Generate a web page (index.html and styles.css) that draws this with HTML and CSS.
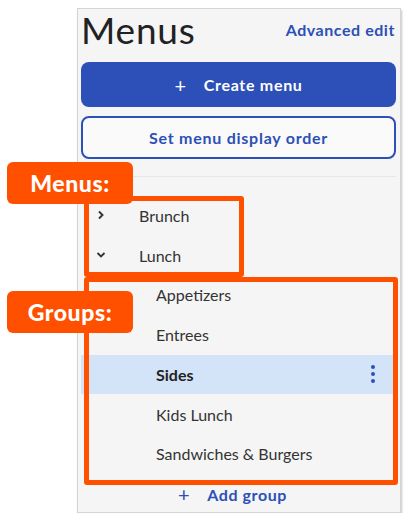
FILE: index.html
```html
<!DOCTYPE html>
<html lang="en">
<head>
<meta charset="utf-8">
<link rel="stylesheet" href="styles.css">
</head>
<body>
<div class="panel">
  <div class="header">
    <h1 class="title">Menus</h1>
    <a class="adv-link">Advanced edit</a>
  </div>
  <button class="btn btn-primary"><span class="plus">+</span>Create menu</button>
  <button class="btn btn-outline">Set menu display order</button>
  <div class="separator"></div>
  <ul class="list">
    <li class="row menu-row">
      <span class="chev">
        <svg width="10" height="10" viewBox="0 0 10 10"><path d="M3 1.5 L6.5 5 L3 8.5" fill="none" stroke="#333" stroke-width="1.9"/></svg>
      </span>
      <span class="menu-name">Brunch</span>
    </li>
    <li class="row menu-row">
      <span class="chev">
        <svg width="10" height="10" viewBox="0 0 10 10"><path d="M1.5 3 L5 6.5 L8.5 3" fill="none" stroke="#333" stroke-width="1.9"/></svg>
      </span>
      <span class="menu-name">Lunch</span>
    </li>
    <li class="row group-row">Appetizers</li>
    <li class="row group-row">Entrees</li>
    <li class="row group-row selected">
      <span class="group-name">Sides</span>
      <span class="kebab"><i></i><i></i><i></i></span>
    </li>
    <li class="row group-row">Kids Lunch</li>
    <li class="row group-row">Sandwiches &amp; Burgers</li>
  </ul>
  <a class="add-group"><span class="plus">+</span>Add group</a>

  <div class="hl hl-menus"></div>
  <div class="hl hl-groups"></div>
  <div class="tag tag-menus">Menus:</div>
  <div class="tag tag-groups">Groups:</div>
</div>
</body>
</html>
```

FILE: styles.css
```css
* { box-sizing: border-box; }
html, body { margin: 0; padding: 0; background: #ffffff; }
body { font-family: Lato, "Open Sans", sans-serif; color: #333; }

.panel {
  position: relative;
  width: 324px;
  height: 505px;
  margin: 8px 0 0 77px;
  background: #f5f5f5;
  border: 1px solid #d4d4d4;
  box-shadow: 1px 2px 2px rgba(0,0,0,0.22);
  padding: 0 4px 0 3px;
  display: flex;
  flex-direction: column;
}
.panel > * { flex-shrink: 0; }

.header {
  display: flex;
  justify-content: space-between;
  align-items: flex-start;
  height: 53px;
  padding: 0 1px 0 0;
}
.title {
  margin: -1px 0 0 0;
  font-family: Lato, sans-serif;
  font-weight: 400;
  font-size: 37px;
  line-height: 44px;
  color: #222;
  letter-spacing: 0.8px;
}
.adv-link {
  margin-top: 11px;
  font-size: 16px;
  line-height: 20px;
  font-weight: 700;
  color: #2c50b7;
  letter-spacing: 0.55px;
}

.btn {
  display: flex;
  align-items: center;
  justify-content: center;
  width: 100%;
  font-family: Lato, sans-serif;
  font-size: 16px;
  font-weight: 700;
  border-radius: 8px;
  cursor: pointer;
  letter-spacing: 0.7px;
}
.btn-primary {
  height: 45px;
  background: #2c50b7;
  color: #fff;
  border: none;
}
.btn-outline {
  margin-top: 9px;
  height: 43px;
  background: #fafafa;
  color: #2c50b7;
  border: 2px solid #2c50b7;
  letter-spacing: 0.75px;
}
.plus {
  font-weight: 400;
  font-size: 20px;
  margin-right: 17px;
  line-height: 1;
}

.separator {
  margin-top: 17px;
  height: 1px;
  background: #e6e6e6;
}

.list {
  list-style: none;
  margin: 18px 0 0 0;
  padding: 0;
}
.row {
  height: 40px;
  display: flex;
  align-items: center;
  font-size: 16px;
  color: #333;
}
.menu-row { height: 40px; }
.chev {
  width: 14px;
  margin-left: 15px;
  margin-right: 29px;
  display: flex;
  align-items: center;
}
.group-row { padding-left: 75px; padding-right: 21px; height: 39.75px; }
.group-row.selected { background: #d3e4f8; font-weight: 700; color: #222; }
.group-name { flex: 1; }
.kebab {
  display: flex;
  flex-direction: column;
  gap: 3px;
}
.kebab i {
  display: block;
  width: 4px;
  height: 4px;
  border-radius: 50%;
  background: #2c50b7;
}

.add-group {
  height: 38px;
  padding-top: 3px;
  display: flex;
  align-items: center;
  justify-content: center;
  padding-right: 12px;
  font-size: 16px;
  font-weight: 700;
  color: #2c50b7;
  letter-spacing: 0.6px;
}
.add-group .plus { margin-right: 17px; }

/* annotation overlays */
.hl {
  position: absolute;
  border: 5px solid #ff5000;
  border-radius: 3px;
}
.hl-menus { left: 6px; top: 187px; width: 160px; height: 81px; }
.hl-groups { left: 6px; top: 268px; width: 314px; height: 208px; }
.tag {
  position: absolute;
  background: #ff5000;
  color: #fff;
  font-family: Lato, sans-serif;
  font-weight: 900;
  font-size: 23px;
  border-radius: 6px;
  display: flex;
  align-items: center;
  justify-content: center;
  width: 126px;
  height: 42px;
  letter-spacing: 0.6px;
}
.tag-menus { left: -71px; top: 153px; }
.tag-groups { left: -71px; top: 282px; }
```
